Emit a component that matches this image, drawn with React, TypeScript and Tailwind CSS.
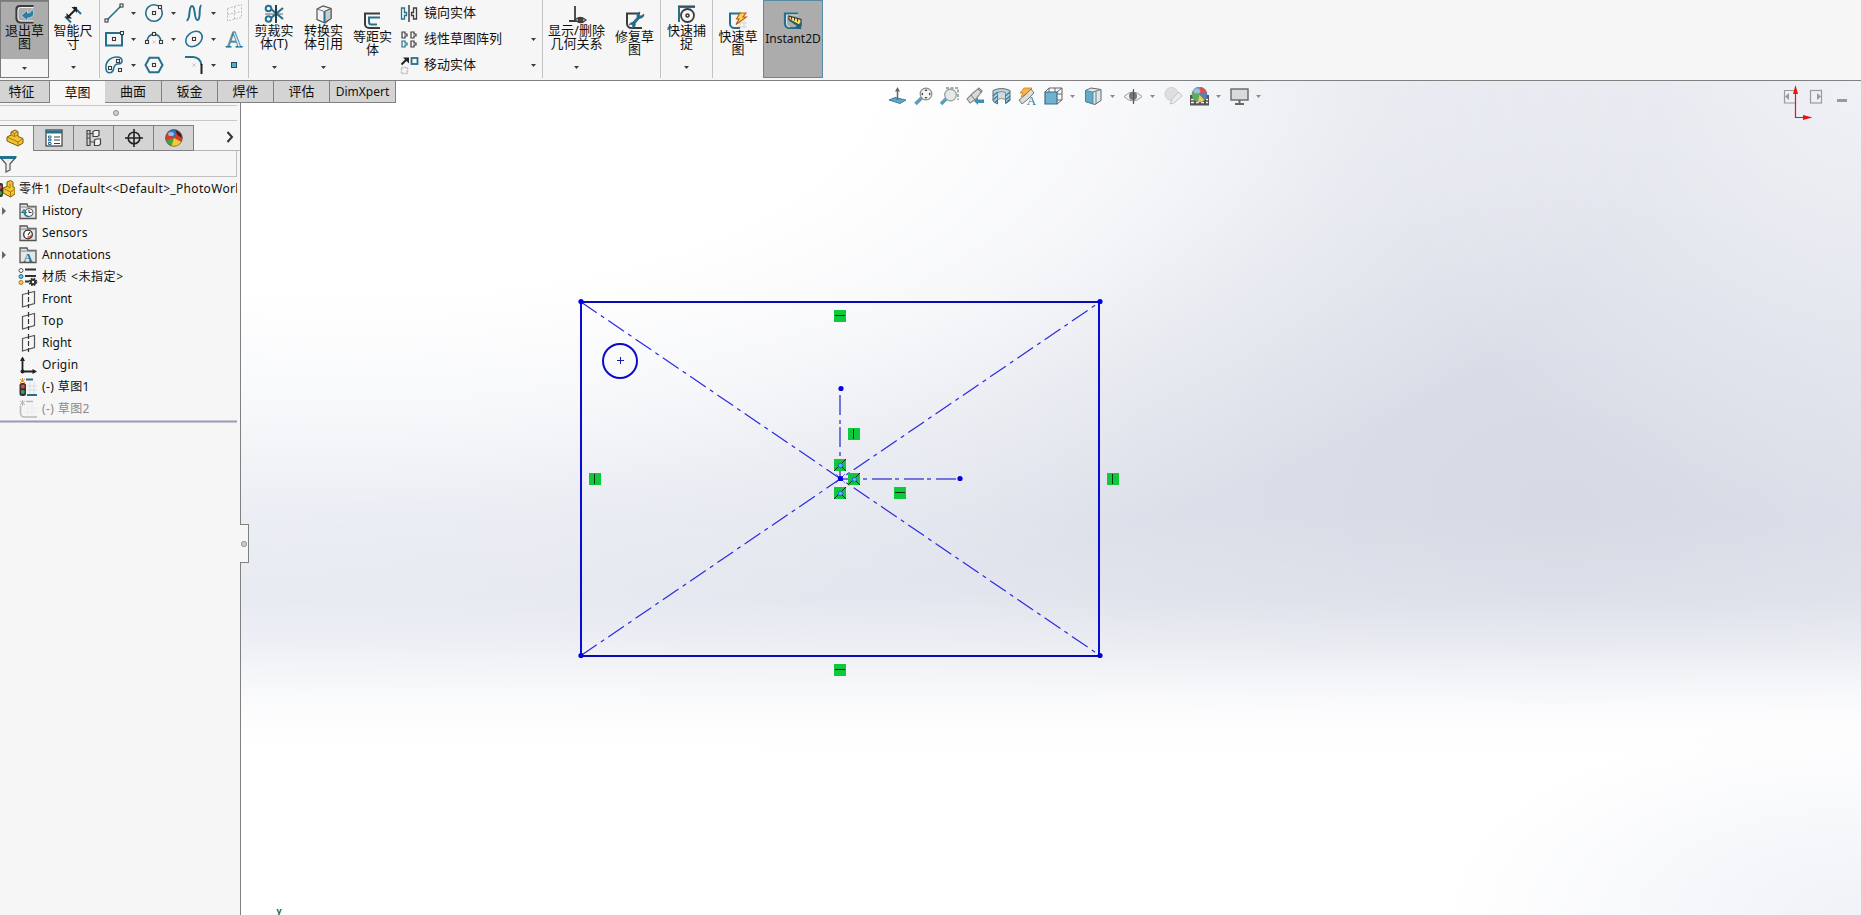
import type { ReactNode } from "react";

const BLUE = "#25708f";
const DARK = "#3c3c3c";

type IconProps = { size?: number; width?: number; children: ReactNode };

const Icon = ({ size = 20, width, children }: IconProps) => (
  <svg
    width={width ?? size}
    height={size}
    viewBox={`0 0 ${width ?? size} ${size}`}
    fill="none"
    stroke={BLUE}
    strokeWidth={1.6}
    className="shrink-0"
  >
    {children}
  </svg>
);

// little square handle used all over the sketch icons
const Node = ({ x, y }: { x: number; y: number }) => (
  <rect x={x - 1.5} y={y - 1.5} width={3} height={3} fill="#fff" stroke={DARK} strokeWidth={1.1} />
);

const Caret = ({ color = "#3c3c3c" }: { color?: string }) => (
  <svg width="5" height="3" viewBox="0 0 5 3" className="shrink-0">
    <path d="M0 0h5L2.5 3z" fill={color} />
  </svg>
);

/* ---------- ribbon icons ---------- */

const ExitIcon = () => (
  <Icon>
    <path d="M18.500 2H4.500a3 3 0 0 0-3 3V14a4 4 0 0 0 4 4.500H18.500" stroke={DARK} strokeWidth={2.200} />
    <path d="M18.500 3.500H5.500a2.500 2.500 0 0 0-2.500 2.500v8a3 3 0 0 0 3 3h12.500" stroke="#eef2f3" strokeWidth={1} />
    <path d="M6.500 11.500l6-5.500v3c3 0 4.500-2 4.500-4.500 3.500 5.500 1 9.500-4.500 9.500v3z" fill="#2b7ea3" stroke="#e5eef2" strokeWidth={0.6} />
  </Icon>
);

const DimensionIcon = () => (
  <Icon>
    <path d="M2 12.500l6 6M11 3l7 7" strokeWidth={2} />
    <path d="M5 13L13 5" stroke="#222" strokeWidth={2} />
    <path d="M3.500 14.500V9l5.500 5.500zM14 3v6L8.500 3z" fill="#222" stroke="none" />
  </Icon>
);

const TrimIcon = () => (
  <Icon>
    <path d="M1 10h18" stroke="#9a9a9a" />
    <path d="M7 5l12 10M7 14L19 4" strokeWidth={2.200} />
    <path d="M12 1v18" stroke="#2c3d46" strokeWidth={2} />
    <circle cx="4.500" cy="4.500" r="2.800" strokeWidth={2} />
    <circle cx="4.500" cy="15" r="2.800" strokeWidth={2} />
  </Icon>
);

const ConvertIcon = () => (
  <Icon>
    <path d="M3 5l6-3 8 2.500v10L11 19l-8-3.500z" fill="#f3f3f3" stroke="#555" strokeWidth={1.200} />
    <path d="M3 5l7.500 2.500L17 4.500" stroke="#777" strokeWidth={1} />
    <path d="M10.500 7.500V18.500L17 14.500v-10z" fill="#c9cdd0" stroke="#555" strokeWidth={1} />
    <path d="M10.500 7.500V18.500" strokeWidth={2} />
  </Icon>
);

const OffsetIcon = () => (
  <Icon>
    <path d="M17 3.500H2V14a4 4 0 0 0 4 4h11" stroke={DARK} strokeWidth={2} />
    <path d="M17 7.500H6v4.500a2.500 2.500 0 0 0 2.500 2.500H14" strokeWidth={2} />
  </Icon>
);

const RelationsIcon = () => (
  <Icon>
    <path d="M8 2v15M2 17h8" stroke={DARK} strokeWidth={1.800} />
    <path d="M8 16q5-5 11 0q-5 5-11 0z" fill="#fff" stroke={DARK} strokeWidth={1.200} />
    <circle cx="13.500" cy="16" r="2.200" fill="#444" stroke={DARK} />
  </Icon>
);

const RepairIcon = () => (
  <Icon>
    <path d="M15 3.500H2v10a4.500 4.500 0 0 0 4.500 4.500H17" stroke={DARK} strokeWidth={2} />
    <path d="M7 15l8-9" strokeWidth={3.200} />
    <path d="M19 4l-3 2-2-1 1-3a4 4 0 0 0-3 5 4 4 0 0 0 7-3zM4 15l3-1 1 2-2 2a3.500 3.500 0 0 0 4-5 4 4 0 0 0-6 2z" fill={BLUE} stroke="#1d5873" strokeWidth={0.500} />
  </Icon>
);

const SnapIcon = () => (
  <Icon>
    <path d="M2 18V3h16" strokeWidth={2} />
    <path d="M1 2h17" stroke={DARK} strokeWidth={1} />
    <circle cx="10.500" cy="11.500" r="6.500" stroke={DARK} strokeWidth={1.800} />
    <circle cx="10.500" cy="11.500" r="1.500" stroke={DARK} strokeWidth={1.600} />
  </Icon>
);

const RapidIcon = () => (
  <Icon>
    <path d="M12 10v8M16 10v8M8 13h11M8 17h11" stroke="#d4d4d4" strokeWidth={1} />
    <path d="M13 3.500H2v10a4.500 4.500 0 0 0 4.500 4.500H12" strokeWidth={2} />
    <path d="M12 3h6l-3 4h3.500L8 14.500l3-5.500H8.500z" fill="#ffd34a" stroke="#b95d16" strokeWidth={1.100} />
  </Icon>
);

const InstantIcon = () => (
  <Icon>
    <path d="M15 2.500H2v10a4.500 4.500 0 0 0 4.500 4.500H18" strokeWidth={2.200} />
    <path d="M15 4H3.500v9a3.500 3.500 0 0 0 3.500 3" stroke="#e8f1f5" strokeWidth={0.800} />
    <path d="M6 5l12 3.500v6l-3-1-9-5z" fill="#f6df6b" stroke="#333" strokeWidth={1.100} />
    <path d="M8.500 6v2.500M11.500 7v2.500M14.500 8v2.500" stroke="#333" strokeWidth={1} />
    <path d="M6 9l10 6.500M17.500 17.500v-5l-4.500 4z" fill="#20617d" stroke="#20617d" strokeWidth={1.300} />
  </Icon>
);

const sketchTools: { name: string; caret?: boolean; icon: ReactNode }[] = [
  { name: "line", caret: true, icon: <><path d="M3 17L17 3" /><Node x={2.5} y={17.5} /><Node x={17.5} y={2.5} /></> },
  { name: "circle", caret: true, icon: <><circle cx="10" cy="10" r="8.300" /><Node x={10} y={10} /><Node x={16} y={4} /></> },
  { name: "spline", caret: true, icon: <path d="M2.500 17.500C7 17.500 4 3 8 3s1.500 14 5.500 14S14 2.500 17.500 2.500" strokeWidth={2} /> },
  {
    name: "plane",
    icon: (
      <g stroke="#bdbdbd" strokeWidth={1} strokeDasharray="2 1.5">
        <path d="M3.500 5.500l14-4v13l-14 3.500zM10.500 3.500v13M3.500 11.500l14-3" />
      </g>
    ),
  },
  { name: "rect", caret: true, icon: <><rect x="2" y="4" width="16" height="12.500" strokeWidth={2} /><Node x={10} y={10} /><Node x={18} y={4} /></> },
  {
    name: "arc",
    caret: true,
    icon: (
      <>
        <path d="M3 13C3 2.500 17 2.500 17 13" />
        <path d="M8.500 11.500l3 3m0-3l-3 3" stroke="#c4c4c4" strokeWidth={0.800} />
        <Node x={3} y={13} />
        <Node x={17} y={13} />
        <Node x={10} y={5} />
      </>
    ),
  },
  { name: "ellipse", caret: true, icon: <><ellipse cx="10" cy="10" rx="9" ry="6.800" transform="rotate(-38 10 10)" /><Node x={10} y={10} /></> },
  {
    name: "text",
    icon: (
      <text x="10" y="18" textAnchor="middle" fontSize="23" fontFamily="Liberation Serif, serif" fill="#fff" stroke={BLUE} strokeWidth={0.8}>
        A
      </text>
    ),
  },
  {
    name: "slot",
    caret: true,
    icon: (
      <>
        <path d="M2 14C1 7 6 2 13 2c6 0 7 7 1 7-3 0-4 2-4.500 5-1 5-7 5-7.500 0z" />
        <Node x={6} y={13} />
        <Node x={14} y={6} />
        <Node x={16} y={15} />
      </>
    ),
  },
  { name: "polygon", icon: <><path d="M1.500 10L5.500 2.800h9L18.500 10l-4 7.200h-9z" strokeWidth={2} /><Node x={10} y={10} /></> },
  {
    name: "fillet",
    caret: true,
    icon: (
      <>
        <path d="M1 2h8a8.500 8.500 0 0 1 8.500 8" strokeWidth={2} />
        <path d="M17.500 9v10" stroke="#222" strokeWidth={2} />
        <path d="M8.500 8.500l3 3m0-3l-3 3" stroke="#bbb" strokeWidth={0.800} />
      </>
    ),
  },
  { name: "point", icon: <rect x="7.500" y="7.500" width="5" height="5" fill="#4cb0c8" stroke="#1b4e63" strokeWidth={1} /> },
];

/* ---------- ribbon ---------- */

type RibbonButtonProps = { icon: ReactNode; label: string[]; width: string; low?: boolean; caret?: boolean };

const RibbonButton = ({ icon, label, width, low, caret }: RibbonButtonProps) => (
  <button className={`flex h-[79px] flex-col items-center ${width} ${low ? "pt-2.5" : "pt-1"}`}>
    {icon}
    <span className="text-center text-[13px] leading-[13px] whitespace-nowrap">
      {label.map((line) => (
        <span key={line} className="block">{line}</span>
      ))}
    </span>
    {caret && <span className="mt-auto mb-2.5"><Caret /></span>}
  </button>
);

const Divider = () => <div className="h-[78px] w-px shrink-0 bg-[#c3c3c3]" />;

const entityRows = [
  {
    label: "镜向实体",
    icon: (
      <>
        <path d="M1.500 4v11h3v-3.500h2v-3h-2V4z" strokeWidth={1.300} />
        <path d="M9 1v17" stroke="#222" strokeWidth={1.300} />
        <path d="M16.500 4v11h-3v-3.500h-2v-3h2V4z" stroke={DARK} strokeWidth={1.300} />
      </>
    ),
  },
  {
    label: "线性草图阵列",
    caret: true,
    icon: (
      <>
        <path d="M2 2v6h3V6h2V4H5V2zM11 2v6h3V6h2V4h-2V2zM11 11v6h3v-2h2v-2h-2v-2z" stroke={DARK} strokeWidth={1.200} />
        <path d="M2 11v6h3v-2h2v-2H5v-2z" strokeWidth={1.200} />
      </>
    ),
  },
  {
    label: "移动实体",
    caret: true,
    icon: (
      <>
        <path d="M1.500 8.500L7 3" stroke="#222" strokeWidth={2} />
        <path d="M3 1.500h6v6z" fill="#222" stroke="none" />
        <rect x="11.500" y="2" width="6" height="6" strokeWidth={1.800} />
        <rect x="1.500" y="11.500" width="6" height="6" stroke="#bbb" strokeDasharray="2 1" />
      </>
    ),
  },
];

const Ribbon = () => (
  <header className="flex h-[81px] shrink-0 border-b border-[#808080] bg-[#f6f6f6]">
    <button className="flex h-[78px] w-[49px] flex-col border border-[#7a7a7a]">
      <div className="flex h-[58px] w-full flex-col items-center border-t border-[#5791ad] bg-[#acacac] pt-0.5">
        <ExitIcon />
        <span className="text-center text-[13px] leading-[13px]">退出草<br />图</span>
      </div>
      <div className="flex w-full flex-1 items-center justify-center"><Caret /></div>
    </button>
    <RibbonButton width="w-[50px] pr-0.5" icon={<DimensionIcon />} label={["智能尺", "寸"]} caret />
    <Divider />
    <div className="grid h-[78px] w-[148px] grid-cols-[40px_40px_40px_20px] pl-1">
      {sketchTools.map((tool) => (
        <div key={tool.name} className="flex h-[26px] items-center">
          <Icon>{tool.icon}</Icon>
          {tool.caret && <span className="ml-[7px]"><Caret /></span>}
        </div>
      ))}
    </div>
    <Divider />
    <RibbonButton width="w-[50px]" icon={<TrimIcon />} label={["剪裁实", "体(T)"]} caret />
    <RibbonButton width="w-[49px]" icon={<ConvertIcon />} label={["转换实", "体引用"]} caret />
    <RibbonButton width="w-[49px]" icon={<OffsetIcon />} label={["等距实", "体"]} low />
    <div className="flex h-[78px] w-[145px] flex-col pl-[3px]">
      {entityRows.map((row) => (
        <div key={row.label} className="flex h-[26px] items-center">
          <Icon size={19}>{row.icon}</Icon>
          <span className="ml-[5px] flex-1 pb-0.5 text-[13px] leading-none">{row.label}</span>
          {row.caret && <span className="mr-1.5"><Caret /></span>}
        </div>
      ))}
    </div>
    <Divider />
    <RibbonButton width="w-[67px]" icon={<RelationsIcon />} label={["显示/删除", "几何关系"]} caret />
    <RibbonButton width="w-[49px]" icon={<RepairIcon />} label={["修复草", "图"]} low />
    <div className="w-px" />
    <Divider />
    <RibbonButton width="w-[51px]" icon={<SnapIcon />} label={["快速捕", "捉"]} caret />
    <Divider />
    <RibbonButton width="w-[50px]" icon={<RapidIcon />} label={["快速草", "图"]} low />
    <button className="flex h-[78px] w-[60px] flex-col items-center border border-[#5a8ba5] bg-[#acacac] pt-2.5">
      <InstantIcon />
      <span className="mt-px text-xs leading-[14px]">Instant2D</span>
    </button>
  </header>
);

const commandTabs = [
  { label: "特征", width: "w-[50px] pr-1.5" },
  { label: "草图", width: "w-[55px]", active: true },
  { label: "曲面", width: "w-[57px]" },
  { label: "钣金", width: "w-[56px]" },
  { label: "焊件", width: "w-[56px]" },
  { label: "评估", width: "w-[56px]" },
  { label: "DimXpert", width: "w-[66px] text-xs" },
];

const CommandTabs = () => (
  <nav className="relative z-10 flex h-[22px] w-[396px] text-[13px]">
    {commandTabs.map((tab) => (
      <button
        key={tab.label}
        className={`flex items-center justify-center leading-none ${tab.width} ${
          tab.active ? "bg-[#f7f7f7]" : "border-r border-b border-[#808080] bg-[#d4d4d4]"
        }`}
      >
        {tab.label}
      </button>
    ))}
  </nav>
);

/* ---------- feature manager ---------- */

const PartIcon = () => (
  <Icon size={18}>
    <path d="M1 8l4-2V3l4-2 3 1.500v5l5 2v4.500l-5 3L1 12z" fill="#f5c431" stroke="#7b5a0c" strokeWidth={1} />
    <path d="M1 8l11 5 5-3.500M12 13v4M5 6l3.500 1.500L12 6M5 3l3.500 1.500L12 2.500M8.500 4.500v3" stroke="#a77a12" strokeWidth={1} />
  </Icon>
);

const PropertyIcon = () => (
  <Icon size={18}>
    <rect x="1" y="1" width="16" height="16" fill="#fff" stroke={DARK} strokeWidth={1.200} />
    <path d="M1 3h16" strokeWidth={3} />
    <path d="M9 8h6M9 11h6M9 14.500h6" stroke={DARK} strokeWidth={1.200} />
    <path d="M3.500 7h2.500v2H3.500zM3.500 10.200h2.500v1.600H3.500zM3.500 13.500h2.500v2H3.500z" strokeWidth={1} />
  </Icon>
);

const ConfigIcon = () => (
  <Icon size={18}>
    <g stroke="#444" strokeWidth={1.200}>
      <path d="M2 1.500h3v15H2zM5 4.500h3M5 13h4" />
      <path d="M8 2.500l2-1h4v5l-1.500 1H8zM9.500 11l2-1h4v5l-1.500 1.500H9.500z" fill="#f2f2f2" />
      <path d="M2 5h3M2 9h3" />
    </g>
  </Icon>
);

const DimXpertIcon = () => (
  <Icon size={18}>
    <circle cx="9" cy="9" r="5.800" stroke="#222" strokeWidth={1.600} />
    <path d="M9 0v18M0 9h18" stroke="#222" strokeWidth={1.600} />
  </Icon>
);

const BallIcon = () => (
  <svg width="18" height="18" viewBox="0 0 18 18" className="shrink-0">
    <circle cx="9" cy="9" r="8.500" fill="#d9392b" />
    <path d="M9 9L2 4A8.500 8.500 0 0 1 12 1z" fill="#2a78c8" />
    <path d="M9 9L2 4a8.500 8.500 0 0 0-1 8z" fill="#d9392b" />
    <path d="M9 9l-8 2.500A8.500 8.500 0 0 0 7 17.200z" fill="#41a63d" />
    <path d="M9 9L6.500 17.200A8.500 8.500 0 0 0 16.500 13z" fill="#f2cc2f" />
    <path d="M10 1l2.500 5 4.500 3a8.500 8.500 0 0 0-7-8z" fill="#2d2320" />
    <ellipse cx="6" cy="5" rx="3" ry="2" fill="#fff" opacity=".5" />
    <circle cx="9" cy="9" r="8.300" fill="none" stroke="#555" strokeWidth=".6" />
  </svg>
);

const Folder = ({ children }: { children: ReactNode }) => (
  <Icon size={18}>
    <path d="M1 16.500V2h7l1 2.500h8v12z" fill="#e4e6e8" stroke="#555" strokeWidth={1.300} />
    <path d="M2 5h15" stroke="#888" strokeWidth={1} />
    {children}
  </Icon>
);

const HistoryIcon = () => (
  <Folder>
    <circle cx="10" cy="10.500" r="4" fill="#fff" stroke="#555" strokeWidth={1} />
    <path d="M10 8v2.500h2.500" stroke="#333" strokeWidth={1} />
    <path d="M3 10.500h4L5 8zM5 10q0 5 5.500 4.500" fill="none" strokeWidth={1.200} />
  </Folder>
);

const SensorIcon = () => (
  <Folder>
    <circle cx="9" cy="10.500" r="4.300" fill="#fff" stroke="#333" strokeWidth={1.300} />
    <path d="M9 11l2-3" stroke="#333" strokeWidth={1.200} />
    <path d="M8.500 13h3l1-2" stroke="#d23b1e" strokeWidth={1.500} />
  </Folder>
);

const AnnotationIcon = () => (
  <Folder>
    <text x="9" y="15.500" textAnchor="middle" fontSize="13" fontWeight="bold" fontFamily="Liberation Serif, serif" fill={BLUE} stroke="none">
      A
    </text>
  </Folder>
);

const MaterialIcon = () => (
  <Icon size={18} width={20}>
    <path d="M7 1.500h11M7 8h11M7 13.500h4" stroke="#333" strokeWidth={1.800} />
    <circle cx="3" cy="2.500" r="2" fill="#fff" stroke="#555" strokeWidth={1} />
    <circle cx="3" cy="8.500" r="2" fill="#6bc0e6" strokeWidth={1} />
    <circle cx="3" cy="14.500" r="2" fill="#f7cf3c" stroke="#a87b12" strokeWidth={1} />
    <circle cx="15" cy="14" r="2.200" stroke="#333" strokeWidth={2} />
    <circle cx="15" cy="14" r="3.500" stroke="#333" strokeWidth={1.500} strokeDasharray="1.5 1.3" />
  </Icon>
);

const PlaneIcon = () => (
  <Icon size={18}>
    <path d="M3.500 4.500l12-3v12l-12 3.500z" stroke="#555" strokeWidth={1.200} />
    <path d="M9.500 0v18" stroke="#333" strokeWidth={1.200} strokeDasharray="5 2" />
  </Icon>
);

const OriginIcon = () => (
  <Icon size={18}>
    <path d="M3.500 2v13.500H16" stroke="#222" strokeWidth={1.800} />
    <path d="M1 5l2.500-4.500L6 5zM13.500 13l4.500 2.500-4.500 2.500z" fill="#222" stroke="none" />
    <circle cx="3.500" cy="15.500" r="2" fill="#222" stroke="none" />
  </Icon>
);

const SketchLightIcon = () => (
  <Icon size={18}>
    <path d="M11 4v12M15 4v12M8 8h10M8 12h10" stroke="#d8dde0" strokeWidth={1} />
    <path d="M7 1.500h7M8 17h10" strokeWidth={1.800} />
    <path d="M1 1l5 4M6 1L1 5M3.500 0v4" stroke="#e08a1e" strokeWidth={1} />
    <rect x=".5" y="5" width="6.500" height="13" rx="2.500" fill="#333" stroke="none" />
    <circle cx="3.800" cy="8.500" r="2" fill="#e04b3f" stroke="none" />
    <circle cx="3.800" cy="14" r="2" fill="#3ca34a" stroke="none" />
  </Icon>
);

const SketchDimIcon = () => (
  <Icon size={18}>
    <path d="M9 4v12M13 4v12M5 8h13M5 12h13" stroke="#ececec" strokeWidth={1} />
    <path d="M7 1.500h7M1.500 6v7a4 4 0 0 0 4 4H18" stroke="#b9b9b9" strokeWidth={1.600} />
    <path d="M1 1l5 4M6 1L1 5M3.500 0v6" stroke="#aaa" strokeWidth={0.900} />
  </Icon>
);

const treeItems = [
  { label: "History", icon: <HistoryIcon />, arrow: true },
  { label: "Sensors", icon: <SensorIcon />, className: "tracking-[0.15px]" },
  { label: "Annotations", icon: <AnnotationIcon />, arrow: true },
  { label: "材质 <未指定>", icon: <MaterialIcon />, className: "tracking-[0.6px]" },
  { label: "Front", icon: <PlaneIcon /> },
  { label: "Top", icon: <PlaneIcon />, className: "tracking-[0.4px]" },
  { label: "Right", icon: <PlaneIcon /> },
  { label: "Origin", icon: <OriginIcon />, className: "tracking-[0.15px]" },
  { label: "(-) 草图1", icon: <SketchLightIcon />, className: "tracking-[0.4px]" },
  { label: "(-) 草图2", icon: <SketchDimIcon />, className: "tracking-[0.4px] text-[#8a8a8a]" },
];

const panelTabs = [
  { name: "property", icon: <PropertyIcon /> },
  { name: "config", icon: <ConfigIcon /> },
  { name: "dimxpert", icon: <DimXpertIcon /> },
  { name: "display", icon: <BallIcon /> },
];

const FeaturePanel = () => (
  <aside className="flex w-[241px] shrink-0 flex-col border-r border-[#808080] bg-[#f6f6f6]">
    <CommandTabs />
    <div className="mt-0.5 mr-[3px] flex h-4 items-center justify-center border-y border-[#c9c9c9]">
      <span className="mr-1.5 size-[6px] rounded-full border border-[#8a8a8a] bg-[#d0d0d0]" />
    </div>
    <div className="mt-1 flex h-[26px]">
      <div className="flex w-[33px] items-center border-t border-[#909090] pb-0.5 pl-1.5"><PartIcon /></div>
      {panelTabs.map((tab, i) => (
        <div
          key={tab.name}
          className={`flex items-center justify-center border-y border-r border-[#808080] bg-[#d4d4d4] ${i === 0 ? "w-[41px] border-l" : "w-10"}`}
        >
          {tab.icon}
        </div>
      ))}
      <div className="flex flex-1 items-center justify-end border-b border-[#b5b5b5] pr-1.5 pb-px">
        <Icon size={12} width={8}><path d="M1.500 1l4.500 5-4.500 5" stroke="#333" strokeWidth={2} /></Icon>
      </div>
    </div>
    <div className="mr-[3px] flex h-[26px] items-center border-r border-b border-[#c0c0c0]">
      <Icon size={18}>
        <path d="M0 2h16l-6 7v6l-4 2V9z" fill="#e9eef0" stroke="#555" strokeWidth={1.200} />
        <path d="M0 2.500h16" strokeWidth={3} />
      </Icon>
    </div>
    <div className="mr-[3px] flex h-[23px] items-center overflow-hidden pt-px text-xs">
      <svg width="15" height="18" viewBox="0 0 15 18" className="shrink-0">
        <path d="M3 8l4-1.500V2l3.500-1.500L13 2v5l2 1v6l-4.500 3L3 13z" fill="#f5c431" stroke="#7b5a0c" />
        <path d="M3 8l7.500 4 4-2.500M10.500 12v5M7 6l3 2M10 3.500V8" stroke="#a77a12" fill="none" />
        <rect x="-4" y="3" width="7" height="14" rx="2" fill="#333" />
        <circle cx="0" cy="7" r="2" fill="#e04b3f" />
        <circle cx="0" cy="13" r="2" fill="#3ca34a" />
      </svg>
      <span className="ml-1 tracking-[0.33px] whitespace-pre">零件1  (Default&lt;&lt;Default&gt;_PhotoWork</span>
    </div>
    <ul className="text-xs">
      {treeItems.map((item) => (
        <li key={item.label} className="flex h-[22px] items-center">
          <span className="flex w-[18px] pl-0.5">
            {item.arrow && (
              <svg width="4" height="8" viewBox="0 0 4 8"><path d="M0 0l4 4-4 4z" fill="#666" /></svg>
            )}
          </span>
          <span className="flex w-6 justify-center pr-1">{item.icon}</span>
          <span className={`leading-none ${item.className ?? ""}`}>{item.label}</span>
        </li>
      ))}
    </ul>
    <div className="mr-[3px] h-[3px] border-y border-[#c5c5d4] bg-[#9c9bb8]" />
  </aside>
);

/* ---------- heads-up view toolbar ---------- */

const viewTools: { name: string; caret?: boolean; icon: ReactNode }[] = [
  {
    name: "normal-to",
    icon: (
      <>
        <path d="M1 13l6-2.500L18 13l-6 3.500z" fill="#58a9cb" stroke="#4b7d94" strokeWidth={1} />
        <path d="M9.500 13V3" stroke="#666" strokeWidth={1.500} />
        <path d="M7 4.500L9.500 0 12 4.500z" fill="#666" stroke="none" />
      </>
    ),
  },
  {
    name: "zoom-fit",
    icon: (
      <>
        <path d="M1.500 17l6-6" stroke="#5b9dbb" strokeWidth={3.500} />
        <circle cx="12" cy="7" r="5.800" fill="#f3f5f6" stroke="#8a8a8a" strokeWidth={1.200} />
        <path d="M12 2l1.500 2h-3zM12 12l1.500-2h-3zM7 7l2-1.500v3zM17 7l-2-1.500v3z" fill="#444" stroke="none" />
      </>
    ),
  },
  {
    name: "zoom-area",
    icon: (
      <>
        <path d="M6 1h12v12" stroke="#555" strokeWidth={1} strokeDasharray="3 1.500" />
        <path d="M1 17l6-6" stroke="#5b9dbb" strokeWidth={3.500} />
        <circle cx="10.500" cy="8" r="5.800" fill="#e3e8ea" stroke="#9a9a9a" strokeWidth={1.200} />
      </>
    ),
  },
  {
    name: "previous",
    icon: (
      <>
        <path d="M1 12l3 4 6-4 6-8-3-3-6 5z" fill="#d9d9d9" stroke="#8a8a8a" strokeWidth={1.200} />
        <path d="M5 8l4 5M12 2l4 4" stroke="#777" strokeWidth={1} />
        <path d="M8 14l4-3.500v2h6v3.500h-6v2z" fill="#3f8fb5" stroke="none" />
      </>
    ),
  },
  {
    name: "section",
    icon: (
      <>
        <path d="M1 3.500q8.500-4 17 0v10l-4.500 3V8h-8v9L1 14z" fill="#b5d5e2" stroke="#666" strokeWidth={1} />
        <path d="M5.500 5.500q4-2 8 0v7q-4-2-8 0z" fill="#d3d8db" stroke="#777" strokeWidth={0.800} />
        <path d="M1 9l4.500-4M1 13l4.500-4M2.500 16l3-3M13.500 9l4.500-4M13.500 13l4.500-4M14 16l4-4" stroke="#2e7ea3" strokeWidth={1.200} />
      </>
    ),
  },
  {
    name: "annotation-view",
    icon: (
      <>
        <path d="M6 1h8l-3 4-8 5 2-4H2z" fill="#f6b64a" stroke="#c98426" strokeWidth={0.800} />
        <path d="M1 13l3 4 5-4 7-7-3-4-6 6z" fill="#dcdcdc" stroke="#777" strokeWidth={1} />
        <text x="13.500" y="18" textAnchor="middle" fontSize="13" fontFamily="Liberation Serif, serif" fill="#2f7ea3" stroke="none">A</text>
      </>
    ),
  },
  {
    name: "orientation",
    caret: true,
    icon: (
      <>
        <path d="M5 1h13v12l-5 4M5 1L1 5M18 1l-5 4M11 1v12M5 7h13M5 13h13M5 1v12" stroke="#666" strokeWidth={1} />
        <path d="M1 5h12v12H1z" fill="#6fb2cf" stroke="#3b6f87" strokeWidth={1.200} />
      </>
    ),
  },
  {
    name: "display-style",
    caret: true,
    icon: (
      <>
        <path d="M1.500 3.500L7 1l10 1.500v11L11 17.500l-9.500-3z" fill="#dce9ef" stroke="#666" strokeWidth={1} />
        <path d="M1.500 3.500L9 5v12l-7.500-2.500z" fill="#64abc9" stroke="#4a7f97" strokeWidth={0.800} />
        <path d="M9 5l8-2.500M12 4.500V17" stroke="#777" strokeWidth={1} />
      </>
    ),
  },
  {
    name: "hide-show",
    caret: true,
    icon: (
      <>
        <path d="M0 9.500q9-9 18 0q-9 9-18 0z" fill="#f2f2f2" stroke="#999" strokeWidth={1} />
        <circle cx="9" cy="9" r="4" fill="#777" stroke="none" />
        <path d="M9.500 2v15" stroke="#555" strokeWidth={1.200} />
      </>
    ),
  },
  {
    name: "edit-appearance",
    icon: (
      <>
        <circle cx="7.500" cy="7" r="6.500" fill="#dedede" stroke="#d0d0d0" strokeWidth={1} />
        <path d="M6 17l2-5 7-7 3 4-8 7z" fill="#ececec" stroke="#c5c5c5" strokeWidth={1} />
      </>
    ),
  },
  {
    name: "scene",
    caret: true,
    icon: (
      <>
        <path d="M0 8h19v10.500H0z" fill="#555" stroke="none" />
        <path d="M1 12.500h17M1 15.500h17" stroke="#eee" strokeWidth={1.500} strokeDasharray="3 2" />
        <circle cx="9.500" cy="7.500" r="7.500" fill="#d65450" stroke="#777" strokeWidth={0.600} />
        <path d="M9.500 7.500L2.500 5A7.500 7.500 0 0 1 9.500 0z" fill="#5fa0cf" stroke="none" />
        <path d="M9.500 7.500L2.500 5A7.500 7.500 0 0 0 8 14.800z" fill="#57b05a" stroke="none" />
        <path d="M9.500 7.500L8 14.800a7.500 7.500 0 0 0 6.500-1.800z" fill="#e6cf55" stroke="none" />
        <path d="M9.500 7.500l5 5.500a7.500 7.500 0 0 0 2-8z" fill="#4b86c4" stroke="none" />
        <ellipse cx="7" cy="4" rx="3.500" ry="2.500" fill="#fff" opacity=".35" stroke="none" />
      </>
    ),
  },
  {
    name: "view-settings",
    caret: true,
    icon: (
      <>
        <rect x="1" y="2" width="17" height="11" fill="#d9dadb" stroke="#666" strokeWidth={1.400} />
        <path d="M9.500 13v3M5 17h9" stroke="#666" strokeWidth={2} />
      </>
    ),
  },
];

const ViewToolbar = () => (
  <div className="absolute top-[5px] left-[647px] flex h-5 gap-[7px]">
    {viewTools.map((tool) => (
      <div key={tool.name} className="flex items-center">
        <Icon size={19}>{tool.icon}</Icon>
        {tool.caret && <span className="mr-0.5 ml-[7px]"><Caret color="#8a8a8a" /></span>}
      </div>
    ))}
  </div>
);

/* ---------- sketch canvas ---------- */

type Relation = { x: number; y: number; kind: "h" | "v" | "mid" };

const relations: Relation[] = [
  { x: 840, y: 316, kind: "h" },
  { x: 840, y: 670, kind: "h" },
  { x: 900, y: 493, kind: "h" },
  { x: 595, y: 479, kind: "v" },
  { x: 1113, y: 479, kind: "v" },
  { x: 854, y: 434, kind: "v" },
  { x: 840, y: 465, kind: "mid" },
  { x: 854, y: 479, kind: "mid" },
  { x: 840, y: 493, kind: "mid" },
];

const RelationMark = ({ x, y, kind }: Relation) => (
  <g transform={`translate(${x} ${y})`}>
    <rect x="-6" y="-6" width="12" height="12" fill="#0fc93c" />
    {kind === "h" && <path d="M-5-.5H5" stroke="#042d0c" />}
    {kind === "v" && <path d="M-.5-5V5" stroke="#042d0c" />}
    {kind === "mid" && (
      <>
        <path d="M-6 6L6-6M1 1l5 5" stroke="#042d0c" />
        <circle r="2.200" cx=".5" cy=".5" fill="#5fb4ff" stroke="#0d58c8" strokeWidth=".8" />
      </>
    )}
  </g>
);

const endpoints = [
  [581, 301.5],
  [1100, 301.5],
  [581, 655.5],
  [1100, 655.5],
  [841, 388.5],
  [960, 478.5],
  [840.5, 478.5],
];

const SketchDrawing = () => (
  <svg className="block h-full w-full" viewBox="241 81 1620 834" fill="none">
    <g stroke="#2a2ae0" strokeWidth="1.2" strokeDasharray="19 5 4 5">
      <path d="M581 302L1100 655.500" />
      <path d="M581 655.500L1100 302" />
    </g>
    <g stroke="#7474dc" strokeWidth="2" strokeDasharray="20 5 4 3">
      <path d="M840 395V478" />
      <path d="M956 479H841" />
    </g>
    <path d="M580 302H1100M580 656H1100" stroke="#0b0bb4" strokeWidth="2" />
    <path d="M581 302V656M1099 302V656" stroke="#0b0bd8" strokeWidth="2" />
    <circle cx="620" cy="361" r="17" stroke="#0b0bc8" strokeWidth="2" />
    <path d="M617 360.500h7M620.500 357v7" stroke="#1a1ab0" />
    {relations.map((r) => (
      <RelationMark key={`${r.x}-${r.y}`} {...r} />
    ))}
    {endpoints.map(([x, y]) => (
      <circle key={`${x}-${y}`} cx={x} cy={y} r="2.600" fill="#0000e6" />
    ))}
    <path d="M836.500 474.500l8 8m0-8l-8 8" stroke="#0000c8" strokeDasharray="1.500 1" />

    {/* document window controls and the origin axes */}
    <g stroke="#9a9a9a" strokeWidth="1.200">
      <path d="M1795 90.500h-10.500v12.500h10.500" />
      <rect x="1810.500" y="90.500" width="11" height="12.500" />
    </g>
    <path d="M1789 93v7l-4-3.500zM1817 93v7l4-3.500zM1837 99h10v3h-10z" fill="#9a9a9a" />
    <path d="M1795.500 90v27.500H1806" stroke="#ee1111" strokeWidth="1.200" />
    <path d="M1793 94l2.500-9 2.500 9zM1803 115l9.500 2.500-9.500 2.500z" fill="#ee1111" />
    <text x="276.500" y="914" fontSize="9" fontWeight="bold" fill="#1d6b2c" fontFamily="Noto Sans, sans-serif">y</text>
  </svg>
);

const Canvas = () => (
  <main className="relative min-w-0 flex-1 bg-[radial-gradient(420px_200px_at_1620px_834px,#f0f2f7,transparent),linear-gradient(180deg,transparent_430px,rgb(255_255_255/.12)_515px,rgb(255_255_255/.4)_563px,rgb(255_255_255/.78)_611px,rgb(255_255_255/.95)_645px,white_675px),radial-gradient(1008px_425px_at_120px_0px,white_50%,rgb(255_255_255/.74)_78%,rgb(255_255_255/.35)_100%,transparent_130%),radial-gradient(480px_460px_at_1620px_0px,rgb(255_255_255/.5),transparent),radial-gradient(620px_430px_at_1319px_425px,#d6dae5,transparent),linear-gradient(90deg,#e2e6ef,#dfe2eb_900px,#e0e3ec)]">
    <SketchDrawing />
    <ViewToolbar />
    <div className="absolute top-[443px] -left-px flex h-[39px] w-[9px] items-center justify-center border-y border-r border-[#808080] bg-[#f6f6f6]">
      <span className="size-[6px] rounded-full border border-[#8a8a8a] bg-[#d0d0d0]" />
    </div>
  </main>
);

export default function App() {
  return (
    <div className="flex h-screen w-screen flex-col overflow-hidden bg-white font-['Noto_Sans','Noto_Sans_CJK_SC',sans-serif] text-[#111]">
      <Ribbon />
      <div className="flex min-h-0 flex-1">
        <FeaturePanel />
        <Canvas />
      </div>
    </div>
  );
}
